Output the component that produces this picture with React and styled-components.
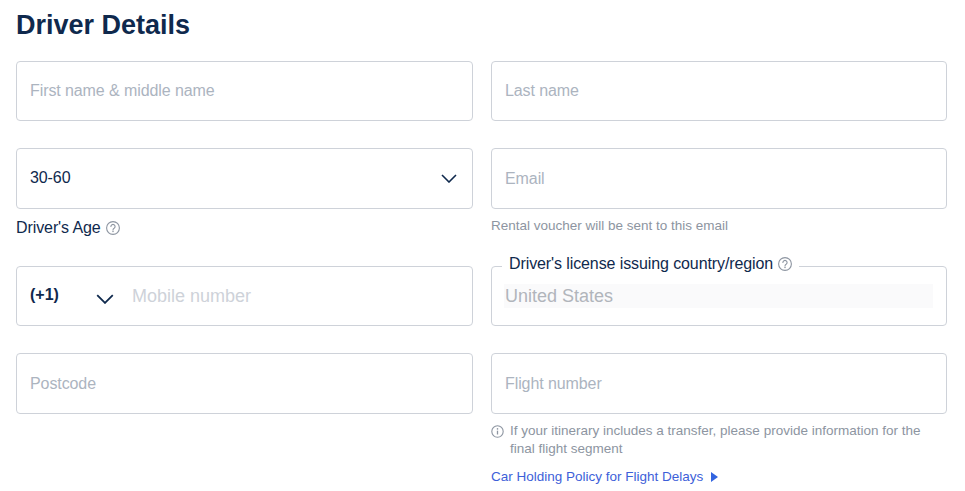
import styled, { createGlobalStyle } from 'styled-components';

function HelpIcon() {
  return (
    <svg width='14' height='14' viewBox='0 0 14 14' fill='none'>
      <circle cx='7' cy='7' r='6.4' stroke='#8d95a1' strokeWidth='1.1' />
      <path
        d='M4.9 5.5a2.1 2.1 0 1 1 3.2 1.8c-.7.4-1.1.7-1.1 1.6'
        stroke='#8d95a1'
        strokeWidth='1.1'
        strokeLinecap='round'
      />
      <circle cx='7' cy='10.6' r='.75' fill='#8d95a1' />
    </svg>
  );
}

function InfoIcon() {
  return (
    <svg width='13' height='13' viewBox='0 0 13 13' fill='none'>
      <circle cx='6.5' cy='6.5' r='5.7' stroke='#8d95a1' strokeWidth='1.1' />
      <circle cx='6.5' cy='3.9' r='.8' fill='#8d95a1' />
      <path d='M6.5 5.7v3.8' stroke='#8d95a1' strokeWidth='1.3' />
    </svg>
  );
}

function Chevron({ width = 16, height = 9 }) {
  return (
    <svg width={width} height={height} viewBox='0 0 16 9' fill='none'>
      <path d='M1 1l7 7 7-7' stroke='#0f294d' strokeWidth='1.6' />
    </svg>
  );
}

function App() {
  return (
    <Page>
      <GlobalStyle />
      <Title>Driver Details</Title>
      <Form>
        <Field $h={60}>
          <Input placeholder='First name & middle name' />
        </Field>
        <Field $h={60}>
          <Input placeholder='Last name' />
        </Field>

        <Column>
          <Field $h={61}>
            <Value>30-60</Value>
            <Chevron />
          </Field>
          <AgeLabel>
            Driver's Age <HelpIcon />
          </AgeLabel>
        </Column>
        <Column>
          <Field $h={61}>
            <Input placeholder='Email' />
          </Field>
          <Hint>Rental voucher will be sent to this email</Hint>
        </Column>

        <Field $h={60}>
          <Code>(+1)</Code>
          <CodeArrow>
            <Chevron width={18} height={10} />
          </CodeArrow>
          <Input $large $light placeholder='Mobile number' />
        </Field>
        <Field $h={60}>
          <Legend>
            Driver's license issuing country/region <HelpIcon />
          </Legend>
          <Disabled>United States</Disabled>
        </Field>

        <Field $h={61}>
          <Input placeholder='Postcode' />
        </Field>
        <Column>
          <Field $h={61}>
            <Input placeholder='Flight number' />
          </Field>
          <Note>
            <InfoIcon />
            <span>
              If your itinerary includes a transfer, please provide information
              for the final flight segment
            </span>
          </Note>
          <Policy href='#'>
            Car Holding Policy for Flight Delays
            <svg width='7' height='10' viewBox='0 0 7 10'>
              <path d='M0 0l7 5-7 5z' fill='#3264e0' />
            </svg>
          </Policy>
        </Column>
      </Form>
    </Page>
  );
}

// -------------------- styling --------------------
const GlobalStyle = createGlobalStyle`
  body {
    margin: 0;
    background: #fff;
    font-family: "Liberation Sans", Arial, sans-serif;
    color: #0f294d;
  }
`;

const Page = styled.div`
  width: 965px;
  height: 491px;
  padding: 10px 18px 0 16px;
  box-sizing: border-box;
  overflow: hidden;
`;

const Title = styled.h1`
  margin: 0 0 21px;
  font-size: 27px;
  line-height: 30px;
  font-weight: 700;
`;

const Form = styled.div`
  display: grid;
  grid-template-columns: 457px 456px;
  column-gap: 18px;
  row-gap: 27px;
  align-items: start;
`;

const Column = styled.div`
  display: flex;
  flex-direction: column;
`;

const Field = styled.div`
  position: relative;
  height: ${({ $h }) => $h}px;
  box-sizing: border-box;
  display: flex;
  align-items: center;
  justify-content: space-between;
  padding: 0 15px 0 13px;
  border: 1px solid #ced2d9;
  border-radius: 4px;
  background: #fff;
`;

const Input = styled.input`
  flex: 1;
  min-width: 0;
  padding: 0;
  border: 0;
  outline: 0;
  background: transparent;
  font-family: inherit;
  font-size: ${({ $large }) => ($large ? 18 : 16)}px;
  letter-spacing: ${({ $large }) => ($large ? 0 : -0.09)}px;
  color: #0f294d;

  &::placeholder {
    color: ${({ $light }) => ($light ? '#ced2d9' : '#acb4bf')};
    opacity: 1;
  }
`;

const Value = styled.span`
  margin-top: -2px;
  font-size: 16px;
  letter-spacing: -0.09px;
`;

const Code = styled.span`
  width: 66px;
  margin-top: -2px;
  font-size: 16px;
  font-weight: 700;
`;

const CodeArrow = styled.span`
  display: flex;
  margin: 6px 18px 0 0;
`;

const AgeLabel = styled.div`
  display: flex;
  align-items: center;
  gap: 5px;
  margin: 10px 0 2px;
  font-size: 16px;
  line-height: 18px;
  letter-spacing: -0.09px;
`;

const Hint = styled.div`
  margin-top: 9px;
  font-size: 13.5px;
  line-height: 16px;
  color: #8d95a1;
`;

const Legend = styled.div`
  position: absolute;
  top: -13px;
  left: 10px;
  display: flex;
  align-items: center;
  gap: 5px;
  padding: 0 7px;
  background: #fff;
  font-size: 16px;
  line-height: 20px;
  letter-spacing: -0.1px;
`;

const Disabled = styled.div`
  flex: 1;
  margin: 0 -2px 0 -1px;
  padding-left: 1px;
  height: 24px;
  line-height: 24px;
  font-size: 18px;
  color: #b1b5bb;
  background: #fafafb;
`;

const Note = styled.div`
  display: flex;
  gap: 6px;
  margin-top: 8px;
  font-size: 13.5px;
  line-height: 18px;
  color: #8d95a1;

  svg {
    flex: none;
    margin-top: 3px;
  }
`;

const Policy = styled.a`
  display: flex;
  align-items: center;
  gap: 8px;
  margin-top: 10px;
  font-size: 13.5px;
  line-height: 18px;
  color: #3d5fd9;
  text-decoration: none;
`;

export default App;
